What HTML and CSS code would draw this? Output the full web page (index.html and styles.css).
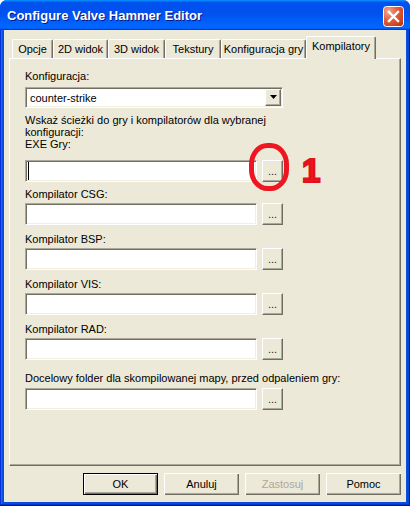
FILE: index.html
```html
<!DOCTYPE html>
<html>
<head>
<meta charset="utf-8">
<link rel="stylesheet" href="styles.css">
</head>
<body>
<div class="window">
  <div class="titlebar">
    <span class="title">Configure Valve Hammer Editor</span>
    <svg class="close" width="21" height="21" viewBox="0 0 21 21">
      <defs>
        <radialGradient id="cg" cx="25%" cy="25%" r="95%">
          <stop offset="0" stop-color="#F3A990"/>
          <stop offset="0.45" stop-color="#E2603E"/>
          <stop offset="1" stop-color="#C0360F"/>
        </radialGradient>
      </defs>
      <rect x="0.5" y="0.5" width="20" height="20" rx="3" fill="url(#cg)" stroke="#ffffff"/>
      <path d="M6 6 L15 15 M15 6 L6 15" stroke="#ffffff" stroke-width="2.4" stroke-linecap="square"/>
    </svg>
  </div>
  <div class="client">
    <div class="tabstrip">
      <div class="tab t1">Opcje</div>
      <div class="tab t2">2D widok</div>
      <div class="tab t3">3D widok</div>
      <div class="tab t4">Tekstury</div>
      <div class="tab t5">Konfiguracja gry</div>
      <div class="tab t6 selected">Kompilatory</div>
    </div>
    <div class="panel">
      <div class="label first-label">Konfiguracja:</div>
      <div class="combo">
        <span class="combo-text">counter-strike</span>
        <span class="combo-btn">
          <svg width="7" height="4" viewBox="0 0 7 4"><polygon points="0,0 7,0 3.5,4" fill="#000"/></svg>
        </span>
      </div>
      <div class="label desc">Wskaż ścieżki do gry i kompilatorów dla wybranej<br>konfiguracji:</div>
      <div class="label">EXE Gry:</div>
      <div class="row row-exe">
        <div class="field"><span class="caret"></span></div>
        <div class="browse">...</div>
      </div>
      <div class="label lbl-csg">Kompilator CSG:</div>
      <div class="row">
        <div class="field"></div>
        <div class="browse">...</div>
      </div>
      <div class="label lbl-next">Kompilator BSP:</div>
      <div class="row">
        <div class="field"></div>
        <div class="browse">...</div>
      </div>
      <div class="label lbl-next">Kompilator VIS:</div>
      <div class="row">
        <div class="field"></div>
        <div class="browse">...</div>
      </div>
      <div class="label lbl-next">Kompilator RAD:</div>
      <div class="row">
        <div class="field"></div>
        <div class="browse">...</div>
      </div>
      <div class="label lbl-last">Docelowy folder dla skompilowanej mapy, przed odpaleniem gry:</div>
      <div class="row row-last">
        <div class="field"></div>
        <div class="browse">...</div>
      </div>
    </div>
    <div class="buttons">
      <div class="btn default">OK</div>
      <div class="btn">Anuluj</div>
      <div class="btn disabled">Zastosuj</div>
      <div class="btn">Pomoc</div>
    </div>
  </div>
  <div class="annot-ring"></div>
  <div class="annot-num">1</div>
</div>
</body>
</html>
```

FILE: styles.css
```css
html, body {
  margin: 0;
  padding: 0;
  background: #ffffff;
}
body {
  width: 410px;
  height: 506px;
  overflow: hidden;
  font-family: "Liberation Sans", Arial, sans-serif;
  font-size: 11px;
  color: #000;
}
.window {
  position: relative;
  width: 410px;
  height: 506px;
  border-radius: 7px 7px 0 0;
  overflow: hidden;
  display: flex;
  flex-direction: column;
  background:
    linear-gradient(to top, #001A8C 0 1px, #0833C8 1px 2px, transparent 2px),
    linear-gradient(to right, #0831D9 0 1px, #166AEE 1px 2px, #0855DD 2px 3px, #0A4BE0 3px calc(100% - 4px), #0855DD calc(100% - 4px) calc(100% - 3px), #0A45D8 calc(100% - 3px) calc(100% - 1px), #001EA0 calc(100% - 1px));
}
.titlebar {
  height: 30px;
  flex: none;
  display: flex;
  align-items: flex-start;
  justify-content: space-between;
  padding: 0 6px 0 7px;
  background: linear-gradient(180deg, #0997FF 0%, #0053EE 8%, #0050EE 40%, #0066FF 88%, #0066FF 93%, #005BFF 95%, #003DD7 96%, #003DD7 100%);
}
.title {
  color: #fff;
  font-weight: bold;
  font-size: 13px;
  line-height: 15px;
  margin-top: 8px;
  text-shadow: 1px 1px #0A1883;
}
.close {
  display: block;
  margin-top: 6px;
}
.client {
  flex: 1;
  margin: 0 4px 4px;
  background: #ECE9D8;
  display: flex;
  flex-direction: column;
  padding-top: 6px;
}
.tabstrip {
  height: 22px;
  flex: none;
  display: flex;
  align-items: flex-end;
  padding-left: 8px;
}
.tab {
  box-sizing: border-box;
  height: 19px;
  padding-top: 3px;
  line-height: 12px;
  text-align: center;
  white-space: nowrap;
  background: #ECE9D8;
  border-top: 1px solid #fff;
  border-left: 1px solid #fff;
  border-right: 1px solid #716F64;
  box-shadow: inset -1px 0 #ACA899;
  border-radius: 2px 2px 0 0;
}
.tab.selected {
  height: 23px;
  margin-bottom: -1px;
  position: relative;
  z-index: 1;
}
.t1 { width: 41px; }
.t2 { width: 55px; }
.t3 { width: 57px; }
.t4 { width: 56px; }
.t5 { width: 85px; }
.t6 { width: 70px; }
.panel {
  flex: 1;
  margin: 0 5px;
  background: #ECE9D8;
  border-top: 1px solid #fff;
  border-left: 1px solid #fff;
  border-right: 1px solid #716F64;
  border-bottom: 1px solid #716F64;
  box-shadow: inset -1px -1px #ACA899;
  padding: 11px 0 0 15px;
  display: flex;
  flex-direction: column;
}
.label {
  line-height: 12px;
  white-space: nowrap;
}
.combo {
  box-sizing: border-box;
  width: 258px;
  height: 21px;
  margin-top: 5px;
  background: #fff;
  border-top: 1px solid #ACA899;
  border-left: 1px solid #ACA899;
  border-bottom: 1px solid #fff;
  border-right: 1px solid #fff;
  box-shadow: inset 1px 1px #716F64, inset -1px -1px #F1EFE2;
  display: flex;
  align-items: stretch;
  padding: 1px 1px 1px 1px;
}
.combo-text {
  flex: 1;
  line-height: 12px;
  padding: 3px 0 0 3px;
}
.combo-btn {
  box-sizing: border-box;
  width: 16px;
  background: #ECE9D8;
  border-top: 1px solid #fff;
  border-left: 1px solid #fff;
  border-right: 1px solid #716F64;
  border-bottom: 1px solid #716F64;
  box-shadow: inset -1px -1px #ACA899;
  display: flex;
  align-items: center;
  justify-content: center;
  padding-bottom: 1px;
}
.combo-btn svg { display: block; }
.desc { margin-top: 6px; }
.row {
  display: flex;
  gap: 5px;
  margin-top: 3px;
}
.row-exe { margin-top: 10px; }
.lbl-csg { margin-top: 6px; }
.lbl-next { margin-top: 8px; }
.lbl-last { margin-top: 12px; }
.row-last { margin-top: 4px; }
.field {
  box-sizing: border-box;
  width: 232px;
  height: 22px;
  background: #fff;
  border-top: 1px solid #ACA899;
  border-left: 1px solid #ACA899;
  border-bottom: 1px solid #fff;
  border-right: 1px solid #fff;
  box-shadow: inset 1px 1px #716F64, inset -1px -1px #F1EFE2;
  padding: 1px 0 1px 1px;
  display: flex;
}
.caret {
  width: 1px;
  background: #000;
  margin-left: 1px;
}
.browse {
  box-sizing: border-box;
  width: 21px;
  height: 22px;
  background: #ECE9D8;
  border-top: 1px solid #fff;
  border-left: 1px solid #fff;
  border-right: 1px solid #716F64;
  border-bottom: 1px solid #716F64;
  box-shadow: inset -1px -1px #ACA899;
  display: flex;
  align-items: center;
  justify-content: center;
  line-height: 12px;
  color: #222;
}
.buttons {
  flex: none;
  height: 22px;
  margin: 7px 5px 7px 0;
  display: flex;
  justify-content: flex-end;
  gap: 6px;
}
.btn {
  box-sizing: border-box;
  width: 75px;
  height: 22px;
  background: #ECE9D8;
  display: flex;
  align-items: center;
  justify-content: center;
  line-height: 12px;
  box-shadow: inset 1px 1px #fff, inset -1px -1px #716F64, inset -2px -2px #ACA899;
}
.btn.default {
  box-shadow: inset 0 0 0 1px #000, inset 2px 2px #fff, inset -2px -2px #716F64, inset -3px -3px #ACA899;
}
.btn.disabled {
  color: #ACA899;
}
.annot-ring {
  position: absolute;
  left: 249px;
  top: 143px;
  width: 40px;
  height: 48px;
  box-sizing: border-box;
  border: 5px solid #EE1620;
  border-radius: 46% / 44%;
}
.annot-num {
  position: absolute;
  left: 302px;
  top: 154px;
  font-family: "Liberation Sans", Arial, sans-serif;
  font-weight: bold;
  font-size: 33px;
  line-height: 33px;
  color: #EE1620;
  -webkit-text-stroke: 2.2px #E0121C;
}
```
